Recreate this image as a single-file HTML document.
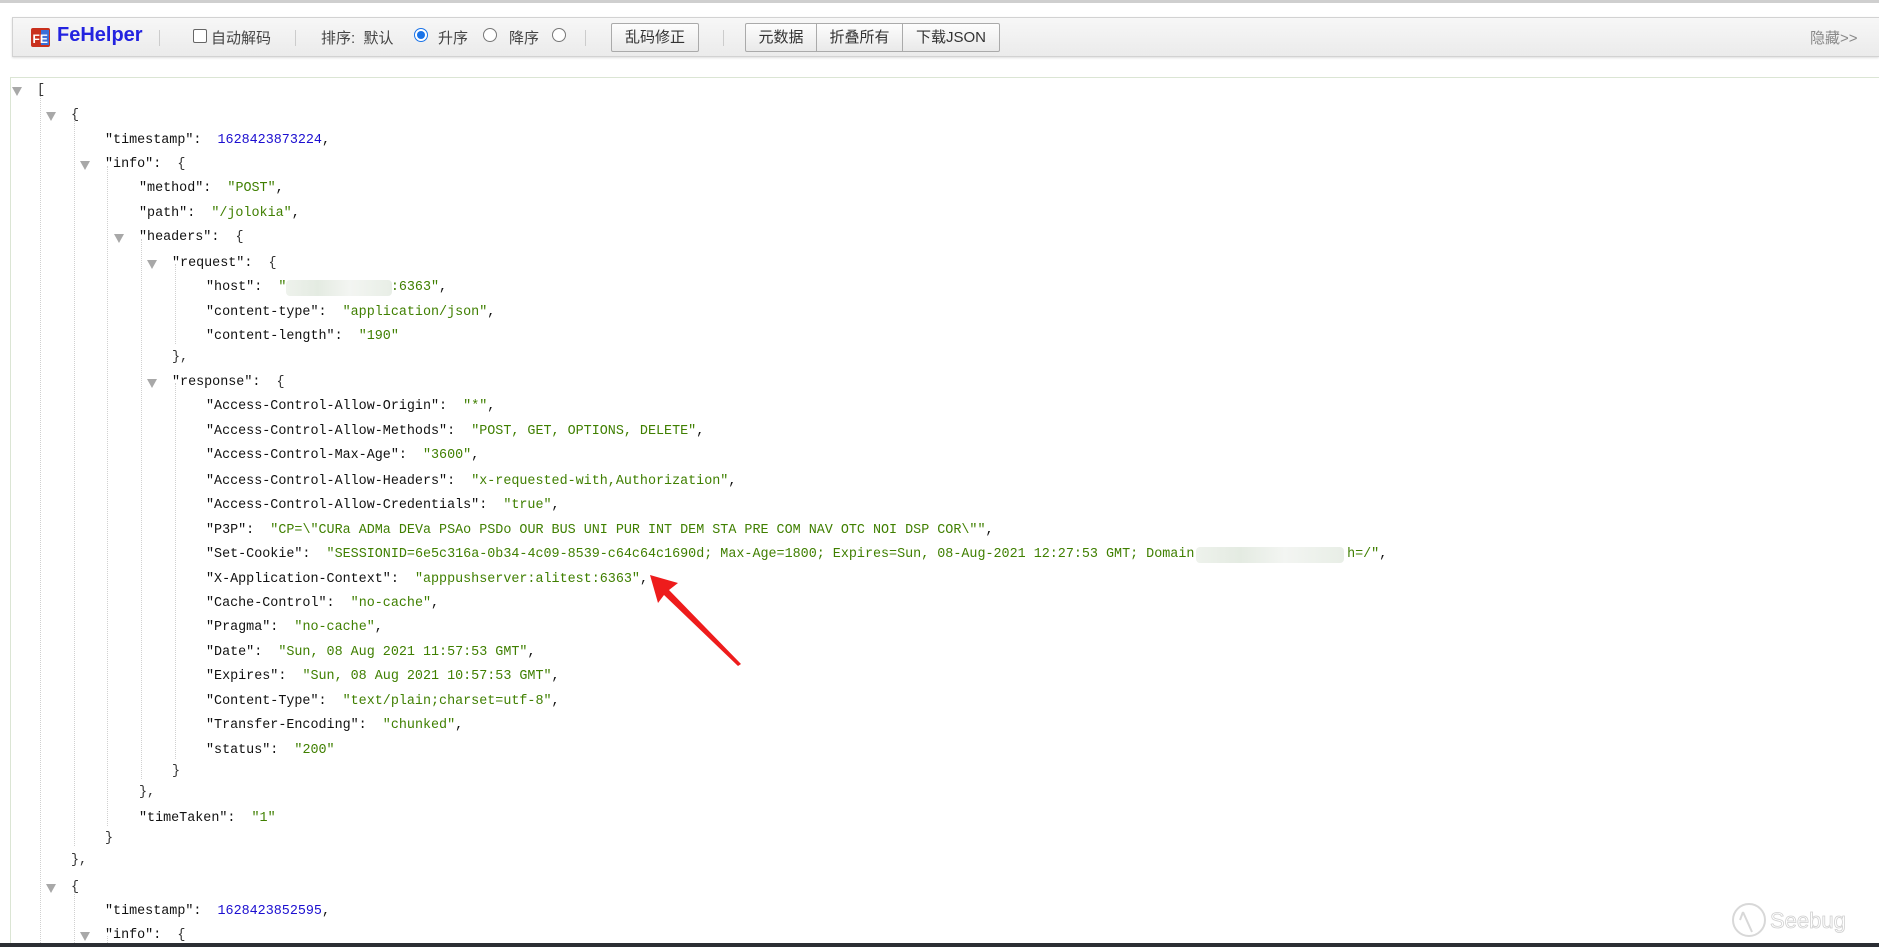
<!DOCTYPE html>
<html><head><meta charset="utf-8"><style>
*{margin:0;padding:0;box-sizing:border-box}
body{width:1879px;height:947px;overflow:hidden;background:#fff;position:relative;font-family:"Liberation Sans","Noto Sans CJK SC",sans-serif}
.topline{position:absolute;left:0;top:0;width:1879px;height:3px;background:#cfcfcf}
.tb{position:absolute;left:12px;top:17px;width:1867px;height:40px;background:linear-gradient(#f7f7f7,#ebebeb);border:1px solid #d2d2d2;border-right:none;box-shadow:0 1px 2px #ddd}
.t{position:absolute;font-size:15px;color:#444;top:9px;white-space:nowrap}
.sep{position:absolute;top:12px;width:1px;height:16px;background:#ccc}
.btn{position:absolute;top:5px;height:29px;border:1px solid #aaa;background:linear-gradient(#fdfdfd,#e9e9e9);font-size:15px;color:#333;text-align:center;line-height:27px;border-radius:2px}
.radio{position:absolute;top:10px;width:14px;height:14px;border:1px solid #777;border-radius:50%;background:#fff}
.main{position:absolute;left:10px;top:77px;width:1869px;height:866px;border-top:1px solid #dbe5d4;border-left:1px solid #dbe5d4}
.r{position:absolute;height:24px;line-height:24px;font-family:"Liberation Mono",monospace;font-size:13.4px;color:#111;white-space:pre}
.s{color:#3f7f00}.n{color:#1c0fd0}.b{color:#333}
.tg{position:absolute;width:0;height:0;border-left:5px solid transparent;border-right:5px solid transparent;border-top:9px solid #a8a8a8}
.v{position:absolute;border-left:1px dotted #d0d0d0}
.blur{position:absolute;height:16px;background:linear-gradient(90deg,#eef2ec,#e4ebe2 30%,#f3f5f2 60%,#e8eee6);border-radius:4px}
.bottom{position:absolute;left:0;top:943px;width:1879px;height:4px;background:#2b2e33}
</style></head><body>
<div class="topline"></div>
<div class="tb">
  <svg style="position:absolute;left:18px;top:10px" width="19" height="19" viewBox="0 0 19 19"><rect x="0" y="0" width="19" height="19" rx="2" fill="#c9301d"/><rect x="10" y="2" width="8" height="15" fill="#3b6fd8"/><text x="1.5" y="15" font-family="Liberation Sans" font-weight="bold" font-size="12" fill="#fff">FE</text></svg>
  <div class="t" style="left:44px;top:6px;font-size:20px;font-weight:bold;color:#2323e0">FeHelper</div>
  <div class="sep" style="left:146px"></div>
  <div style="position:absolute;left:180px;top:11px;width:14px;height:14px;border:1px solid #666;border-radius:2px;background:#fff"></div>
  <div class="t" style="left:198px">自动解码</div>
  <div class="sep" style="left:282px"></div>
  <div class="t" style="left:308px">排序:&nbsp;&nbsp;默认</div>
  <div class="radio" style="left:401px;border-color:#1a73e8"><div style="position:absolute;left:2px;top:2px;width:8px;height:8px;border-radius:50%;background:#1a73e8"></div></div>
  <div class="t" style="left:425px">升序</div>
  <div class="radio" style="left:470px"></div>
  <div class="t" style="left:496px">降序</div>
  <div class="radio" style="left:539px"></div>
  <div class="sep" style="left:572px"></div>
  <div class="btn" style="left:598px;width:88px">乱码修正</div>
  <div class="sep" style="left:710px"></div>
  <div class="btn" style="left:732px;width:72px;border-radius:2px 0 0 2px">元数据</div>
  <div class="btn" style="left:803px;width:87px;border-radius:0">折叠所有</div>
  <div class="btn" style="left:889px;width:98px;border-radius:0 2px 2px 0">下载JSON</div>
  <div class="t" style="left:1797px;color:#888">隐藏&gt;&gt;</div>
</div>
<div class="main"></div>

<div class="v" style="left:40px;top:94px;height:853px"></div>
<div class="v" style="left:74px;top:118px;height:728px"></div>
<div class="v" style="left:107px;top:166px;height:660px"></div>
<div class="v" style="left:141px;top:239px;height:540px"></div>
<div class="v" style="left:175px;top:264px;height:80px"></div>
<div class="v" style="left:175px;top:383px;height:376px"></div>
<div class="v" style="left:74px;top:888px;height:59px"></div>
<div class="v" style="left:107px;top:936px;height:11px"></div>

<div class="tg" style="left:12px;top:87px"></div>
<div class="tg" style="left:46px;top:112px"></div>
<div class="tg" style="left:80px;top:161px"></div>
<div class="tg" style="left:114px;top:234px"></div>
<div class="tg" style="left:147px;top:260px"></div>
<div class="tg" style="left:147px;top:379px"></div>
<div class="tg" style="left:46px;top:884px"></div>
<div class="tg" style="left:80px;top:932px"></div>

<div class="r b" style="left:37px;top:79px">[</div>
<div class="r b" style="left:71px;top:104px">{</div>
<div class="r" style="left:105px;top:129px">"timestamp":  <span class="n">1628423873224</span>,</div>
<div class="r" style="left:105px;top:153px">"info":  <span class="b">{</span></div>
<div class="r" style="left:139px;top:177px">"method":  <span class="s">"POST"</span>,</div>
<div class="r" style="left:139px;top:202px">"path":  <span class="s">"/jolokia"</span>,</div>
<div class="r" style="left:139px;top:226px">"headers":  <span class="b">{</span></div>
<div class="r" style="left:172px;top:252px">"request":  <span class="b">{</span></div>
<div class="r" style="left:206px;top:276px">"host":  <span class="s">"             :6363"</span>,</div>
<div class="blur" style="left:286px;top:280px;width:106px"></div>
<div class="r" style="left:206px;top:301px">"content-type":  <span class="s">"application/json"</span>,</div>
<div class="r" style="left:206px;top:325px">"content-length":  <span class="s">"190"</span></div>
<div class="r b" style="left:172px;top:346px">},</div>
<div class="r" style="left:172px;top:371px">"response":  <span class="b">{</span></div>
<div class="r" style="left:206px;top:395px">"Access-Control-Allow-Origin":  <span class="s">"*"</span>,</div>
<div class="r" style="left:206px;top:420px">"Access-Control-Allow-Methods":  <span class="s">"POST, GET, OPTIONS, DELETE"</span>,</div>
<div class="r" style="left:206px;top:444px">"Access-Control-Max-Age":  <span class="s">"3600"</span>,</div>
<div class="r" style="left:206px;top:470px">"Access-Control-Allow-Headers":  <span class="s">"x-requested-with,Authorization"</span>,</div>
<div class="r" style="left:206px;top:494px">"Access-Control-Allow-Credentials":  <span class="s">"true"</span>,</div>
<div class="r" style="left:206px;top:519px">"P3P":  <span class="s">"CP=\"CURa ADMa DEVa PSAo PSDo OUR BUS UNI PUR INT DEM STA PRE COM NAV OTC NOI DSP COR\""</span>,</div>
<div class="r" style="left:206px;top:543px">"Set-Cookie":  <span class="s">"SESSIONID=6e5c316a-0b34-4c09-8539-c64c64c1690d; Max-Age=1800; Expires=Sun, 08-Aug-2021 12:27:53 GMT; Domain                   h=/"</span>,</div>
<div class="blur" style="left:1196px;top:547px;width:148px"></div>
<div class="r" style="left:206px;top:568px">"X-Application-Context":  <span class="s">"apppushserver:alitest:6363"</span>,</div>
<div class="r" style="left:206px;top:592px">"Cache-Control":  <span class="s">"no-cache"</span>,</div>
<div class="r" style="left:206px;top:616px">"Pragma":  <span class="s">"no-cache"</span>,</div>
<div class="r" style="left:206px;top:641px">"Date":  <span class="s">"Sun, 08 Aug 2021 11:57:53 GMT"</span>,</div>
<div class="r" style="left:206px;top:665px">"Expires":  <span class="s">"Sun, 08 Aug 2021 10:57:53 GMT"</span>,</div>
<div class="r" style="left:206px;top:690px">"Content-Type":  <span class="s">"text/plain;charset=utf-8"</span>,</div>
<div class="r" style="left:206px;top:714px">"Transfer-Encoding":  <span class="s">"chunked"</span>,</div>
<div class="r" style="left:206px;top:739px">"status":  <span class="s">"200"</span></div>
<div class="r b" style="left:172px;top:760px">}</div>
<div class="r b" style="left:139px;top:781px">},</div>
<div class="r" style="left:139px;top:807px">"timeTaken":  <span class="s">"1"</span></div>
<div class="r b" style="left:105px;top:827px">}</div>
<div class="r b" style="left:71px;top:849px">},</div>
<div class="r b" style="left:71px;top:876px">{</div>
<div class="r" style="left:105px;top:900px">"timestamp":  <span class="n">1628423852595</span>,</div>
<div class="r" style="left:105px;top:924px">"info":  <span class="b">{</span></div>

<svg style="position:absolute;left:640px;top:565px" width="110" height="105" viewBox="0 0 110 105">
<polygon points="10,10 38,18 29,25 101,99 98,101 24,30 18,38" fill="#ee1c1c"/>
</svg>

<svg style="position:absolute;left:1730px;top:898px" width="125" height="44" viewBox="0 0 125 44">
<circle cx="19" cy="22" r="16" fill="none" stroke="#d8d8d8" stroke-width="2"/>
<path d="M13 14 L22 34 M13 14 L10 22" stroke="#d8d8d8" stroke-width="2" fill="none"/>
<text x="40" y="30" font-family="Liberation Sans" font-size="22" fill="#fff" stroke="#d0d0d0" stroke-width="0.8">Seebug</text>
</svg>
<div class="bottom"></div>
</body></html>
